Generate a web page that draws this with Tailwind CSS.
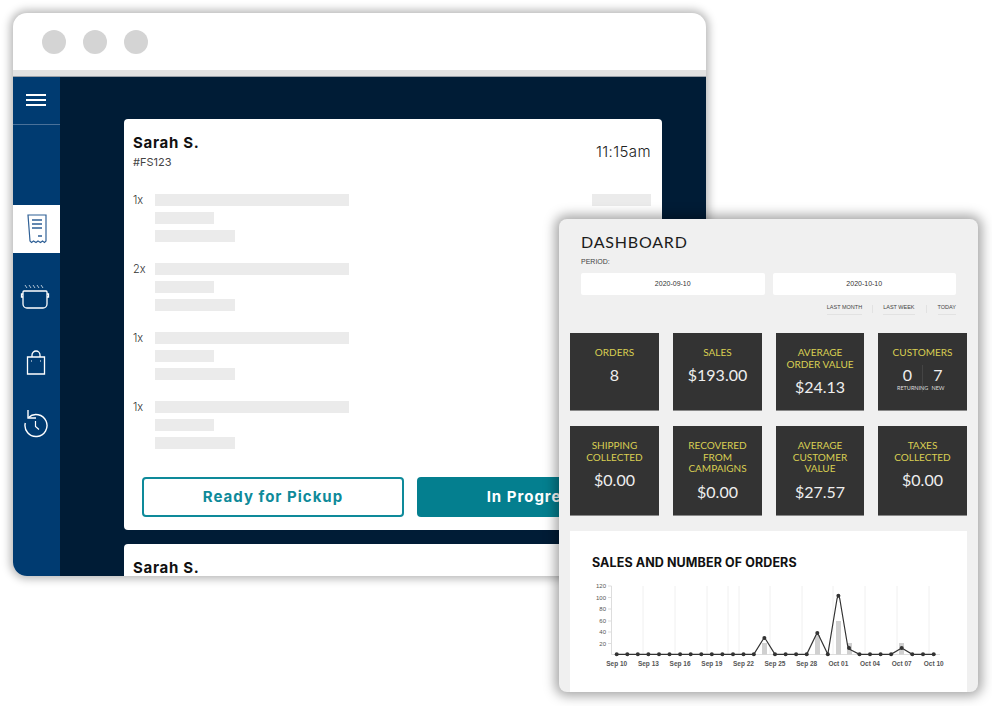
<!DOCTYPE html>
<html lang="en">
<head>
<meta charset="UTF-8" />
<title>Orders and dashboard</title>
<script src="https://cdn.jsdelivr.net/npm/@tailwindcss/browser@4"></script>
</head>
<body class="bg-white">
<div class="relative w-[992px] h-[706px] overflow-hidden bg-white">

  <!-- browser window -->
  <div class="absolute left-[13px] top-[13px] w-[693px] h-[563px] flex flex-col rounded-[14px] overflow-hidden bg-white shadow-[0_0_8px_3px_rgba(0,0,0,0.28)] font-['Inter',sans-serif]">
    <div class="h-[57px] shrink-0 flex items-center gap-[17px] pl-[29px]">
      <span class="size-6 rounded-full bg-[#d4d4d4]"></span>
      <span class="size-6 rounded-full bg-[#d4d4d4]"></span>
      <span class="size-6 rounded-full bg-[#d4d4d4]"></span>
    </div>
    <div class="h-[7px] shrink-0 bg-[#e2e2e2] border-b border-[#9aa0a8]"></div>
    <div class="flex flex-1 min-h-0">
      <!-- sidebar -->
      <div class="w-[47px] shrink-0 bg-[#003b71] flex flex-col">
        <div class="h-[48px] shrink-0 flex flex-col items-center justify-center gap-[3px] border-b border-[#4a7199] pr-[1px] pb-[1px]">
          <span class="w-5 h-[2px] bg-white"></span>
          <span class="w-5 h-[2px] bg-white"></span>
          <span class="w-5 h-[2px] bg-white"></span>
        </div>
        <div class="h-[80px] shrink-0"></div>
        <div class="h-[48px] shrink-0 bg-white flex items-center justify-center">
          <svg width="20" height="30" viewBox="0 0 20 30" fill="none" stroke="#2f6096" stroke-width="1.2">
            <path d="M1 1h18v26l-1.500 1.500-2-1.500-2 1.500-2.500-1.500-2 1.500-2.500-1.500-2 1.500-1.500-1.500z" />
            <path d="M5 6h10M5 10h10M5 14h10M11 22h4" stroke-width="1.400" />
          </svg>
        </div>
        <div class="h-[19px] shrink-0"></div>
        <div class="h-[48px] shrink-0 flex items-center justify-center pr-[3px]">
          <svg width="30" height="25" viewBox="0 0 30 25" fill="none" stroke="#fff" stroke-width="1.300">
            <path d="M4 7h22a1 1 0 0 1 1 1v12a4 4 0 0 1-4 4H7a4 4 0 0 1-4-4V8a1 1 0 0 1 1-1z" />
            <path d="M3 10H1.500v3H3M27 10h1.500v3H27" />
            <path d="M5 1l2 3M9 1l2 3M13 1l2 3M17 1l2 3M21 1l2 3" stroke-width="0.700" />
          </svg>
        </div>
        <div class="h-[18px] shrink-0"></div>
        <div class="h-[48px] shrink-0 flex items-center justify-center pr-[1px]">
          <svg width="20" height="25" viewBox="0 0 20 25" fill="none" stroke="#fff" stroke-width="1.300">
            <path d="M1.500 7h17v17h-17z" />
            <path d="M6 7V5a4 4 0 0 1 8 0v2" />
            <path d="M5.500 10.500v1M14.500 10.500v1" stroke-width="1" />
          </svg>
        </div>
        <div class="h-[13px] shrink-0"></div>
        <div class="h-[48px] shrink-0 flex items-center justify-center pr-[1px]">
          <svg width="26" height="30" viewBox="0 0 26 30" fill="none" stroke="#fff" stroke-width="1.400">
            <path d="M5 2v8h8" />
            <path d="M5.500 9.500A11 11 0 1 1 2.300 15" />
            <path d="M12.500 13v5.500l3.500 3" stroke-width="1.200" />
          </svg>
        </div>
      </div>
      <!-- order list -->
      <div class="flex-1 bg-[#001c36] pl-[64px] pt-[42px] flex flex-col gap-[14px] overflow-hidden">
        <div class="w-[538px] h-[411px] shrink-0 bg-white rounded-[4px] px-[9px] pt-[14px] text-[#111]">
          <div class="flex justify-between items-center h-[36px]">
            <div>
              <div class="text-[15px] leading-[18px] font-bold tracking-[0.7px]">Sarah S.</div>
              <div class="text-[11px] leading-[14px] mt-[3px] text-[#444]">#FS123</div>
            </div>
            <div class="text-[15px] font-light text-[#222] tracking-[0.4px] pr-[2px] pt-[2px]">11:15am</div>
          </div>
          <div class="mt-[25px] flex flex-col gap-[21px]">
            <div class="flex">
              <div class="w-[22px] text-[11px] leading-[13px] font-light text-[#333]">1x</div>
              <div class="flex flex-col gap-[6px] flex-1">
                <div class="w-[194px] h-3 bg-[#ebebeb]"></div>
                <div class="w-[59px] h-3 bg-[#ebebeb]"></div>
                <div class="w-[80px] h-3 bg-[#ebebeb]"></div>
              </div>
              <div class="w-[59px] h-3 mr-[2px] bg-[#ebebeb]"></div>
            </div>
            <div class="flex">
              <div class="w-[22px] text-[11px] leading-[13px] font-light text-[#333]">2x</div>
              <div class="flex flex-col gap-[6px] flex-1">
                <div class="w-[194px] h-3 bg-[#ebebeb]"></div>
                <div class="w-[59px] h-3 bg-[#ebebeb]"></div>
                <div class="w-[80px] h-3 bg-[#ebebeb]"></div>
              </div>
            </div>
            <div class="flex">
              <div class="w-[22px] text-[11px] leading-[13px] font-light text-[#333]">1x</div>
              <div class="flex flex-col gap-[6px] flex-1">
                <div class="w-[194px] h-3 bg-[#ebebeb]"></div>
                <div class="w-[59px] h-3 bg-[#ebebeb]"></div>
                <div class="w-[80px] h-3 bg-[#ebebeb]"></div>
              </div>
            </div>
            <div class="flex">
              <div class="w-[22px] text-[11px] leading-[13px] font-light text-[#333]">1x</div>
              <div class="flex flex-col gap-[6px] flex-1">
                <div class="w-[194px] h-3 bg-[#ebebeb]"></div>
                <div class="w-[59px] h-3 bg-[#ebebeb]"></div>
                <div class="w-[80px] h-3 bg-[#ebebeb]"></div>
              </div>
            </div>
          </div>
          <div class="flex gap-[13px] mt-[28px] ml-[9px]">
            <div class="w-[262px] h-10 flex items-center justify-center rounded-[4px] border-2 border-[#0e8a9a] text-[#0e8a9a] text-[15px] font-bold tracking-[1px]">Ready for Pickup</div>
            <div class="w-[227px] h-10 flex items-center justify-center rounded-[4px] bg-[#047f8f] text-white text-[15px] font-bold tracking-[1px] pl-[6px]">In Progress</div>
          </div>
        </div>
        <div class="w-[538px] h-[100px] shrink-0 bg-white rounded-[4px] px-[9px] pt-[15px] text-[#111]">
          <div class="text-[15px] leading-[18px] font-bold tracking-[0.7px]">Sarah S.</div>
        </div>
      </div>
    </div>
  </div>

  <!-- dashboard window -->
  <div class="absolute left-[559px] top-[219px] w-[419px] h-[473px] flex flex-col rounded-[8px] overflow-hidden bg-[#f0f0f0] shadow-[0_0_12px_4px_rgba(0,0,0,0.35)] font-['Lato',sans-serif]">
    <div class="pl-[22px] pr-[22px] pt-[13px]">
      <div class="text-[16px] leading-[19px] tracking-[0.8px] text-[#1c1c1c]">DASHBOARD</div>
      <div class="text-[7px] leading-[9px] mt-[6px] text-[#444] font-['Liberation_Sans',sans-serif]">PERIOD:</div>
      <div class="flex gap-2 mt-[7px] text-[7px] text-[#333] font-['Liberation_Sans',sans-serif]">
        <div class="w-[184px] h-[22px] flex items-center justify-center bg-white rounded-[2px]">2020-09-10</div>
        <div class="w-[184px] h-[22px] flex items-center justify-center bg-white rounded-[2px]">2020-10-10</div>
      </div>
      <div class="flex justify-end items-center h-[10px] mt-[9px] text-[5.500px] text-[#444] font-['Liberation_Sans',sans-serif]">
        <span class="border-b border-[#e2e2e2] pb-[2px]">LAST MONTH</span>
        <span class="w-px h-2 bg-[#e2e2e2] mx-[10px]"></span>
        <span class="border-b border-[#e2e2e2] pb-[2px]">LAST WEEK</span>
        <span class="w-px h-2 bg-[#e2e2e2] mx-[11px]"></span>
        <span class="border-b border-[#e2e2e2] pb-[2px]">TODAY</span>
      </div>
    </div>

    <!-- stat tiles -->
    <div class="grid grid-cols-[89px_89px_88px_89px] grid-rows-[78px_90px] gap-x-[14px] gap-y-[15px] pl-[11px] mt-[19px] text-center">
      <div class="bg-[#333] border-b border-[#888] pt-[14px] text-[#d9cf52] text-[10px] leading-[11.500px]">
        <div>ORDERS</div>
        <div class="text-[#eee] text-[16px] leading-[20px] mt-[6px]">8</div>
      </div>
      <div class="bg-[#333] border-b border-[#888] pt-[14px] text-[#d9cf52] text-[10px] leading-[11.500px]">
        <div>SALES</div>
        <div class="text-[#eee] text-[16px] leading-[20px] mt-[6px]">$193.00</div>
      </div>
      <div class="bg-[#333] border-b border-[#888] pt-[14px] text-[#d9cf52] text-[10px] leading-[11.500px]">
        <div>AVERAGE<br />ORDER VALUE</div>
        <div class="text-[#eee] text-[16px] leading-[20px] mt-[7px]">$24.13</div>
      </div>
      <div class="bg-[#333] border-b border-[#888] pt-[14px] text-[#d9cf52] text-[10px] leading-[11.500px]">
        <div>CUSTOMERS</div>
        <div class="flex justify-center mt-[6px] ml-[1px] text-[#eee]">
          <div class="w-[30px] border-r border-[#444]">
            <div class="text-[16px] leading-[20px]">0</div>
            <div class="text-[5.500px] leading-[7px] text-[#ddd] whitespace-nowrap text-left pl-[4px]">RETURNING</div>
          </div>
          <div class="w-[30px]">
            <div class="text-[16px] leading-[20px]">7</div>
            <div class="text-[5.500px] leading-[7px] text-[#ddd]">NEW</div>
          </div>
        </div>
      </div>
      <div class="bg-[#333] border-b border-[#888] pt-[14px] text-[#d9cf52] text-[10px] leading-[11.500px]">
        <div>SHIPPING<br />COLLECTED</div>
        <div class="text-[#eee] text-[16px] leading-[20px] mt-[7px]">$0.00</div>
      </div>
      <div class="bg-[#333] border-b border-[#888] pt-[14px] text-[#d9cf52] text-[10px] leading-[11.500px]">
        <div>RECOVERED<br />FROM<br />CAMPAIGNS</div>
        <div class="text-[#eee] text-[16px] leading-[20px] mt-[7px]">$0.00</div>
      </div>
      <div class="bg-[#333] border-b border-[#888] pt-[14px] text-[#d9cf52] text-[10px] leading-[11.500px]">
        <div>AVERAGE<br />CUSTOMER<br />VALUE</div>
        <div class="text-[#eee] text-[16px] leading-[20px] mt-[7px]">$27.57</div>
      </div>
      <div class="bg-[#333] border-b border-[#888] pt-[14px] text-[#d9cf52] text-[10px] leading-[11.500px]">
        <div>TAXES<br />COLLECTED</div>
        <div class="text-[#eee] text-[16px] leading-[20px] mt-[7px]">$0.00</div>
      </div>
    </div>

    <!-- chart panel -->
    <div class="ml-[11px] w-[397px] flex-1 mt-[15px] bg-white pt-[25px]">
      <div class="pl-[22px] text-[12.500px] tracking-[0.1px] leading-[14px] font-bold text-[#111] font-['Inter',sans-serif]">SALES AND NUMBER OF ORDERS</div>
      <svg class="block mt-[9px]" width="397" height="90" viewBox="570 578 397 90" font-family="Liberation Sans, sans-serif" font-size="6" fill="#555">
        <path d="M643 585V653M675 585V653M707 585V653M728 585V653M739 585V653M770 585V653M802 585V653M833 585V653M865 585V653M897 585V653M929 585V653" stroke="#f0f0f0" stroke-width="1" />
        <path d="M611.500 585V653.500H940" stroke="#ddd" stroke-width="1" fill="none" />
        <path d="M608 585h3.500M608 596.500h3.500M608 608h3.500M608 620h3.500M608 631h3.500M608 642.500h3.500" stroke="#ddd" stroke-width="1" />
        <g text-anchor="end">
          <text x="606" y="587">120</text>
          <text x="606" y="598.500">100</text>
          <text x="606" y="610">80</text>
          <text x="606" y="622">60</text>
          <text x="606" y="633">40</text>
          <text x="606" y="644.500">20</text>
        </g>
        <g fill="#d0d0d0">
          <rect x="762" y="642" width="5" height="11.500" />
          <rect x="815" y="634" width="5" height="19.500" />
          <rect x="836" y="620" width="5" height="33.500" />
          <rect x="847" y="642" width="5" height="11.500" />
          <rect x="899" y="642" width="5" height="11.500" />
        </g>
        <path d="M616.700 653.300H753.800L763 638.500Q764.400 636 765.800 638.500L775 653.300H806.700L816 634Q817.300 631 818.600 634L827.800 653.300L837 598Q838.400 592 839.800 598L847.500 644Q848.500 648 851 649L859.500 653.300H891L900 648Q901.700 647 903.400 648L912.300 653.300H933.700" fill="none" stroke="#333" stroke-width="1.200" />
        <g fill="#333">
          <circle cx="616.700" cy="653.300" r="2" /><circle cx="627.300" cy="653.300" r="2" /><circle cx="637.800" cy="653.300" r="2" />
          <circle cx="648.400" cy="653.300" r="2" /><circle cx="659" cy="653.300" r="2" /><circle cx="669.500" cy="653.300" r="2" />
          <circle cx="680.100" cy="653.300" r="2" /><circle cx="690.700" cy="653.300" r="2" /><circle cx="701.300" cy="653.300" r="2" />
          <circle cx="711.800" cy="653.300" r="2" /><circle cx="722.400" cy="653.300" r="2" /><circle cx="733" cy="653.300" r="2" />
          <circle cx="743.500" cy="653.300" r="2" /><circle cx="753.800" cy="653.300" r="2" /><circle cx="764.400" cy="637" r="2" />
          <circle cx="775" cy="653.300" r="2" /><circle cx="785.600" cy="653.300" r="2" /><circle cx="796.100" cy="653.300" r="2" />
          <circle cx="806.700" cy="653.300" r="2" /><circle cx="817.300" cy="632" r="2" /><circle cx="827.800" cy="653.300" r="2" />
          <circle cx="838.400" cy="594.700" r="2" /><circle cx="849" cy="647" r="2" /><circle cx="859.500" cy="653.300" r="2" />
          <circle cx="870" cy="653.300" r="2" /><circle cx="880.600" cy="653.300" r="2" /><circle cx="891.100" cy="653.300" r="2" />
          <circle cx="901.700" cy="647" r="2" /><circle cx="912.300" cy="653.300" r="2" /><circle cx="923" cy="653.300" r="2" />
          <circle cx="933.700" cy="653.300" r="2" />
        </g>
        <g text-anchor="middle" font-weight="700" font-size="6.500">
          <text x="616.700" y="664.500">Sep 10</text>
          <text x="648.400" y="664.500">Sep 13</text>
          <text x="680.100" y="664.500">Sep 16</text>
          <text x="711.800" y="664.500">Sep 19</text>
          <text x="743.500" y="664.500">Sep 22</text>
          <text x="775" y="664.500">Sep 25</text>
          <text x="806.700" y="664.500">Sep 28</text>
          <text x="838.400" y="664.500">Oct 01</text>
          <text x="870" y="664.500">Oct 04</text>
          <text x="901.700" y="664.500">Oct 07</text>
          <text x="933.700" y="664.500">Oct 10</text>
        </g>
      </svg>
    </div>
  </div>
</div>
</body>
</html>
